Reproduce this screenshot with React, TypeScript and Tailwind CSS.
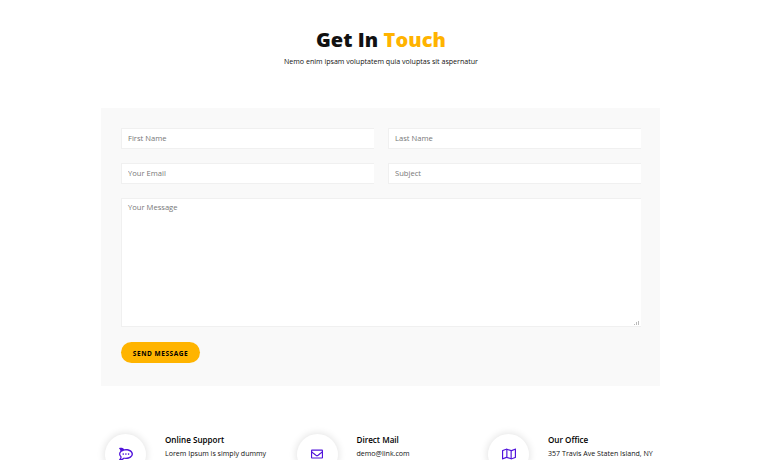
import React from "react";
import { FaRegEnvelope, FaRegMap, FaRocketchat } from "react-icons/fa";
import type { IconType } from "react-icons";

const contacts: { title: string; text: string; icon: IconType; iconSize: string }[] = [
  { title: "Online Support", text: "Lorem Ipsum is simply dummy", icon: FaRocketchat, iconSize: "size-[14px]" },
  { title: "Direct Mail", text: "demo@link.com", icon: FaRegEnvelope, iconSize: "size-[12px]" },
  { title: "Our Office", text: "357 Travis Ave Staten Island, NY", icon: FaRegMap, iconSize: "size-[14px]" },
];

const fieldStyle =
  "block w-full border border-r-0 border-[#f0f0f0] bg-white px-[6px] text-[7.6px] text-[#777777] outline-none placeholder:text-[#777777] placeholder:opacity-100";

function Field({ label }: { label: string }) {
  return <input className={`${fieldStyle} h-[21px] pb-[2px]`} placeholder={label} aria-label={label} />;
}

export default function App() {
  return (
    <main className="h-[460px] w-[760px] overflow-hidden bg-white font-['Open_Sans',sans-serif] text-black">
      <header className="flex h-[108px] flex-col items-center pt-[26px] pl-[2px]">
        <h1 className="h-7 text-[20px] leading-7 font-extrabold tracking-[0.08px] whitespace-nowrap text-[#111111]">
          Get In <span className="text-[#ffb300]">Touch</span>
        </h1>
        <p className="mt-[1px] text-[7.08px] leading-[13px] whitespace-nowrap text-[#111111]">
          Nemo enim ipsam voluptatem quia voluptas sit aspernatur
        </p>
      </header>

      <form className="ml-[101px] h-[278px] w-[559px] bg-[#f9f9f9] pt-5 pr-[19px] pl-5" onSubmit={(e) => e.preventDefault()}>
        <div className="grid grid-cols-[253px_253px] gap-x-[14px] gap-y-[14px]">
          <Field label="First Name" />
          <Field label="Last Name" />
          <Field label="Your Email" />
          <Field label="Subject" />
        </div>
        <textarea
          className={`${fieldStyle} mt-[14px] h-[129px] resize-none pt-[3px] leading-[11px]`}
          placeholder="Your Message"
          aria-label="Your Message"
        />
        <div className="-mt-[6px] flex h-[5px] justify-end pr-[2px]">
          <svg className="relative size-[5px]" viewBox="0 0 5 5" fill="#bbbbbb">
            <path d="M0 3h1v1H0zM2 1h1v3H2zM4 0h1v4H4z" />
          </svg>
        </div>
        <button className="mt-4 flex h-[21px] w-[79px] items-center justify-center rounded-full bg-[#ffb400] pt-[2px] text-[6.5px] font-bold tracking-[0.55px] text-black">
          SEND MESSAGE
        </button>
      </form>

      <section className="mt-[47px] ml-[105px] grid grid-cols-[191.5px_191.5px_191.5px]">
        {contacts.map(({ title, text, icon: Icon, iconSize }) => (
          <article className="flex" key={title}>
            <div className="mt-[1px] flex size-[41px] shrink-0 items-center justify-center rounded-full bg-white pb-[2px] text-[#5013db] shadow-[0_0_8px_rgba(0,0,0,0.14)]">
              <Icon className={iconSize} />
            </div>
            <div className="ml-[19px] whitespace-nowrap">
              <h2 className="text-[8.1px] leading-[13px] font-semibold">{title}</h2>
              <p className="mt-[1px] text-[7.08px] leading-[13px] text-[#111111]">{text}</p>
            </div>
          </article>
        ))}
      </section>
    </main>
  );
}
